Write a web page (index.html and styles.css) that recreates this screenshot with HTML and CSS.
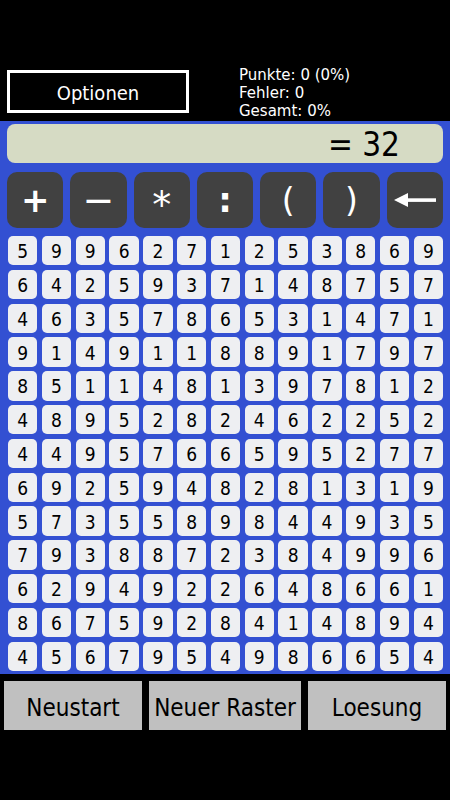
FILE: index.html
```html
<!DOCTYPE html>
<html lang="de">
<head>
<meta charset="utf-8">
<title>Rechenraster</title>
<link rel="stylesheet" href="styles.css">
</head>
<body>
<div class="app">
  <header class="top">
    <div class="opt-btn">Optionen</div>
    <div class="stats">
      <div>Punkte: 0 (0%)</div>
      <div>Fehler: 0</div>
      <div>Gesamt: 0%</div>
    </div>
  </header>
  <main class="panel">
    <div class="expr">= 32</div>
    <div class="ops">
      <div class="op">+</div>
      <div class="op op-minus">−</div>
      <div class="op op-star">*</div>
      <div class="op">:</div>
      <div class="op op-par">(</div>
      <div class="op op-par">)</div>
      <div class="op"><svg class="arrow" width="42" height="16" viewBox="0 0 42 16"><path d="M0 8 L14 1 L14 15 Z" fill="#fff"/><rect x="12" y="6.3" width="30" height="3.6" fill="#fff"/></svg></div>
    </div>
    <div class="grid">
      <div class="c">5</div><div class="c">9</div><div class="c">9</div><div class="c">6</div><div class="c">2</div><div class="c">7</div><div class="c">1</div><div class="c">2</div><div class="c">5</div><div class="c">3</div><div class="c">8</div><div class="c">6</div><div class="c">9</div>
      <div class="c">6</div><div class="c">4</div><div class="c">2</div><div class="c">5</div><div class="c">9</div><div class="c">3</div><div class="c">7</div><div class="c">1</div><div class="c">4</div><div class="c">8</div><div class="c">7</div><div class="c">5</div><div class="c">7</div>
      <div class="c">4</div><div class="c">6</div><div class="c">3</div><div class="c">5</div><div class="c">7</div><div class="c">8</div><div class="c">6</div><div class="c">5</div><div class="c">3</div><div class="c">1</div><div class="c">4</div><div class="c">7</div><div class="c">1</div>
      <div class="c">9</div><div class="c">1</div><div class="c">4</div><div class="c">9</div><div class="c">1</div><div class="c">1</div><div class="c">8</div><div class="c">8</div><div class="c">9</div><div class="c">1</div><div class="c">7</div><div class="c">9</div><div class="c">7</div>
      <div class="c">8</div><div class="c">5</div><div class="c">1</div><div class="c">1</div><div class="c">4</div><div class="c">8</div><div class="c">1</div><div class="c">3</div><div class="c">9</div><div class="c">7</div><div class="c">8</div><div class="c">1</div><div class="c">2</div>
      <div class="c">4</div><div class="c">8</div><div class="c">9</div><div class="c">5</div><div class="c">2</div><div class="c">8</div><div class="c">2</div><div class="c">4</div><div class="c">6</div><div class="c">2</div><div class="c">2</div><div class="c">5</div><div class="c">2</div>
      <div class="c">4</div><div class="c">4</div><div class="c">9</div><div class="c">5</div><div class="c">7</div><div class="c">6</div><div class="c">6</div><div class="c">5</div><div class="c">9</div><div class="c">5</div><div class="c">2</div><div class="c">7</div><div class="c">7</div>
      <div class="c">6</div><div class="c">9</div><div class="c">2</div><div class="c">5</div><div class="c">9</div><div class="c">4</div><div class="c">8</div><div class="c">2</div><div class="c">8</div><div class="c">1</div><div class="c">3</div><div class="c">1</div><div class="c">9</div>
      <div class="c">5</div><div class="c">7</div><div class="c">3</div><div class="c">5</div><div class="c">5</div><div class="c">8</div><div class="c">9</div><div class="c">8</div><div class="c">4</div><div class="c">4</div><div class="c">9</div><div class="c">3</div><div class="c">5</div>
      <div class="c">7</div><div class="c">9</div><div class="c">3</div><div class="c">8</div><div class="c">8</div><div class="c">7</div><div class="c">2</div><div class="c">3</div><div class="c">8</div><div class="c">4</div><div class="c">9</div><div class="c">9</div><div class="c">6</div>
      <div class="c">6</div><div class="c">2</div><div class="c">9</div><div class="c">4</div><div class="c">9</div><div class="c">2</div><div class="c">2</div><div class="c">6</div><div class="c">4</div><div class="c">8</div><div class="c">6</div><div class="c">6</div><div class="c">1</div>
      <div class="c">8</div><div class="c">6</div><div class="c">7</div><div class="c">5</div><div class="c">9</div><div class="c">2</div><div class="c">8</div><div class="c">4</div><div class="c">1</div><div class="c">4</div><div class="c">8</div><div class="c">9</div><div class="c">4</div>
      <div class="c">4</div><div class="c">5</div><div class="c">6</div><div class="c">7</div><div class="c">9</div><div class="c">5</div><div class="c">4</div><div class="c">9</div><div class="c">8</div><div class="c">6</div><div class="c">6</div><div class="c">5</div><div class="c">4</div>
    </div>
  </main>
  <footer class="bottom">
    <div class="btn btn-side">Neustart</div>
    <div class="btn btn-mid">Neuer Raster</div>
    <div class="btn btn-side">Loesung</div>
  </footer>
</div>
</body>
</html>
```

FILE: styles.css
```css
* { box-sizing: border-box; }
html, body {
  margin: 0;
  padding: 0;
  background: #000;
}
.app {
  width: 450px;
  height: 800px;
  background: #000;
  font-family: "DejaVu Sans", Verdana, sans-serif;
  color: #fff;
  overflow: hidden;
}
.top {
  height: 121px;
  display: flex;
  align-items: flex-start;
  padding: 65px 0 0 7px;
}
.opt-btn {
  margin-top: 5px;
  width: 182px;
  height: 43px;
  border: 3px solid #fff;
  display: flex;
  align-items: center;
  justify-content: center;
  font-family: "DejaVu Sans Condensed", "DejaVu Sans", sans-serif;
  font-size: 20px;
  padding-top: 3px;
}
.stats {
  margin-left: 50px;
  font-size: 15px;
  line-height: 18px;
  padding-top: 1px;
}
.panel {
  height: 553px;
  background: #3350d2;
  padding: 3px 7px 3px 7px;
  display: flex;
  flex-direction: column;
}
.expr {
  height: 39px;
  background: #d6dbc4;
  border-radius: 8px;
  color: #000;
  font-family: "DejaVu Sans Condensed", "DejaVu Sans", sans-serif;
  font-size: 33px;
  line-height: 41px;
  text-align: right;
  padding-right: 43px;
}
.ops {
  margin-top: 9px;
  height: 56px;
  display: flex;
  gap: 7px;
}
.op {
  flex: 1;
  background: #414141;
  border-radius: 10px;
  display: flex;
  align-items: center;
  justify-content: center;
  font-size: 34px;
  font-weight: bold;
  color: #fff;
}
.op-minus {
  font-weight: normal;
  font-size: 38px;
}
.op-star {
  font-weight: normal;
  font-size: 38px;
  padding-top: 9px;
}
.op-par {
  font-weight: normal;
  font-size: 33px;
}
.arrow { display: block; }
.grid {
  margin-top: 8px;
  margin-left: 1px;
  width: 435px;
  height: 435px;
  display: grid;
  grid-template-columns: repeat(13, 1fr);
  grid-template-rows: repeat(13, 1fr);
  gap: 4.5px;
}
.c {
  background: #eeeff2;
  border-radius: 5px;
  color: #000;
  display: flex;
  align-items: center;
  justify-content: center;
  font-family: "DejaVu Sans Condensed", "DejaVu Sans", sans-serif;
  font-size: 19px;
  padding-top: 1px;
}
.bottom {
  display: flex;
  gap: 7px;
  padding: 7px 4px 0 4px;
}
.btn {
  height: 49px;
  background: #c0c0c0;
  color: #000;
  display: flex;
  align-items: center;
  justify-content: center;
  font-family: "DejaVu Sans Condensed", "DejaVu Sans", sans-serif;
  font-size: 24px;
  white-space: nowrap;
  padding-top: 5px;
}
.btn-side { width: 138px; }
.btn-mid { width: 152px; }
```
